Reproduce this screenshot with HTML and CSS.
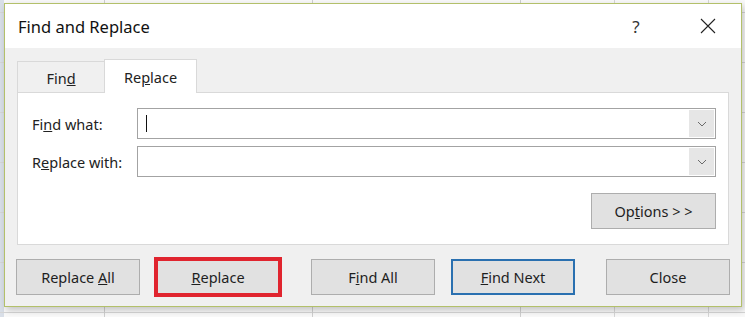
FILE: index.html
```html
<!DOCTYPE html>
<html lang="en">
<head>
    <meta charset="UTF-8">
    <title>Find and Replace</title>
    <link rel="stylesheet" href="styles.css">
</head>
<body>
    <div class="dialog">
        <!-- Title bar -->
        <div class="titlebar">
            <div class="title">Find and Replace</div>
            <div class="help">?</div>
            <div class="close">
                <svg width="16" height="16" viewBox="0 0 16 16">
                    <path d="M1 1 L15 15 M15 1 L1 15" stroke="#222" stroke-width="1.1" fill="none"/>
                </svg>
            </div>
        </div>

        <div class="dialog-body">
            <!-- Tabs -->
            <div class="tabs">
                <div class="tab">Fin<u>d</u></div>
                <div class="tab active">Re<u>p</u>lace</div>
            </div>

            <div class="panel">
                <div class="field-row">
                    <div class="field-label">Fi<u>n</u>d what:</div>
                    <div class="combo">
                        <div class="combo-text"><span class="caret"></span></div>
                        <div class="combo-drop">
                            <svg width="10" height="6" viewBox="0 0 10 6"><path d="M1 1 L5 5 L9 1" stroke="#6b6b6b" fill="none"/></svg>
                        </div>
                    </div>
                </div>
                <div class="field-row">
                    <div class="field-label">R<u>e</u>place with:</div>
                    <div class="combo">
                        <div class="combo-text"></div>
                        <div class="combo-drop">
                            <svg width="10" height="6" viewBox="0 0 10 6"><path d="M1 1 L5 5 L9 1" stroke="#6b6b6b" fill="none"/></svg>
                        </div>
                    </div>
                </div>
                <div class="options-row">
                    <button class="btn">Op<u>t</u>ions &gt; &gt;</button>
                </div>
            </div>

            <!-- Buttons -->
            <div class="actions">
                <button class="btn">Replace <u>A</u>ll</button>
                <button class="btn marked"><u>R</u>eplace</button>
                <button class="btn spaced">F<u>i</u>nd All</button>
                <button class="btn default"><u>F</u>ind Next</button>
                <button class="btn spaced">Close</button>
            </div>
        </div>
    </div>
</body>
</html>
```

FILE: styles.css
```css
* {
    box-sizing: border-box;
    margin: 0;
    padding: 0;
}

body {
    width: 745px;
    height: 317px;
    overflow: hidden;
    padding: 3px 0 0 4px;
    font-family: 'Noto Sans', 'Open Sans', sans-serif;
    color: #1e1e1e;
    background-color: #f9f9f9;
    background-image:
        linear-gradient(#cfcfcf, #cfcfcf),
        linear-gradient(#cfcfcf, #cfcfcf),
        linear-gradient(#cfcfcf, #cfcfcf),
        linear-gradient(#d6d6d6, #d6d6d6),
        linear-gradient(#d6d6d6, #d6d6d6),
        repeating-linear-gradient(to bottom, transparent 0, transparent 12px, #d6d6d6 12px, #d6d6d6 13px, transparent 13px, transparent 50px),
        linear-gradient(#d9dfe8, #d9dfe8);
    background-size: 1px 100%, 1px 100%, 1px 100%, 1px 100%, 1px 100%, 100% 100%, 4px 100%;
    background-position: 104px 0, 312px 0, 520px 0, 614px 0, 708px 0, 0 0, 0 0;
    background-repeat: no-repeat;
}

.dialog {
    width: 738px;
    height: 304px;
    border: 1px solid #b3c06a;
    background-color: #f0f0f0;
    box-shadow: 2px 3px 7px rgba(0, 0, 0, 0.22);
    display: flex;
    flex-direction: column;
}

.titlebar {
    height: 44px;
    background-color: #ffffff;
    display: flex;
    align-items: center;
    padding-left: 13px;
}

.title {
    font-size: 16.5px;
    color: #111;
    flex: 1;
}

.help {
    width: 46px;
    text-align: center;
    font-size: 17px;
    color: #333;
}

.close {
    width: 46px;
    margin-left: 26px;
    margin-right: 10px;
    display: flex;
    justify-content: center;
    align-items: center;
}

.dialog-body {
    flex: 1;
    padding: 11px 12px 0 12px;
    font-size: 14.5px;
}

.tabs {
    display: flex;
    align-items: flex-end;
    height: 33px;
}

.tab {
    width: 87px;
    height: 31px;
    border: 1px solid #d9d9d9;
    border-bottom: none;
    border-right: none;
    display: flex;
    justify-content: center;
    align-items: center;
    padding-top: 2px;
    color: #222;
}

.tab.active {
    width: 93px;
    height: 34px;
    margin-bottom: -1px;
    background-color: #ffffff;
    border-right: 1px solid #d9d9d9;
    position: relative;
    padding-top: 1px;
}

.panel {
    height: 153px;
    background-color: #ffffff;
    border: 1px solid #d9d9d9;
    padding: 15px 12px 0 14px;
    display: flex;
    flex-direction: column;
    gap: 7px;
}

.field-row {
    display: flex;
    align-items: center;
}

.field-label {
    width: 105px;
    color: #222;
}

.combo {
    flex: 1;
    height: 31px;
    border: 1px solid #a3a3a3;
    display: flex;
    background-color: #ffffff;
}

.combo-text {
    flex: 1;
    display: flex;
    align-items: center;
    padding-left: 8px;
}

.caret {
    width: 1px;
    height: 17px;
    background-color: #111;
}

.combo-drop {
    width: 27px;
    background-color: #e6e6e6;
    border: 1px solid #ffffff;
    display: flex;
    justify-content: center;
    align-items: center;
}

.options-row {
    display: flex;
    justify-content: flex-end;
    margin-top: 9px;
}

.btn {
    width: 124px;
    height: 36px;
    font-family: inherit;
    font-size: 14.5px;
    color: #1e1e1e;
    background-color: #e1e1e1;
    border: 1px solid #adadad;
}

.options-row .btn {
    width: 125px;
}

.actions {
    display: flex;
    gap: 16px;
    margin: 14px -1px 0 -1px;
}

.btn.spaced {
    margin-left: 15px;
}

.btn.default {
    border: 2px solid #2a70b0;
}

.btn.marked {
    outline: 4px solid #e0242e;
    outline-offset: -2px;
}
```
